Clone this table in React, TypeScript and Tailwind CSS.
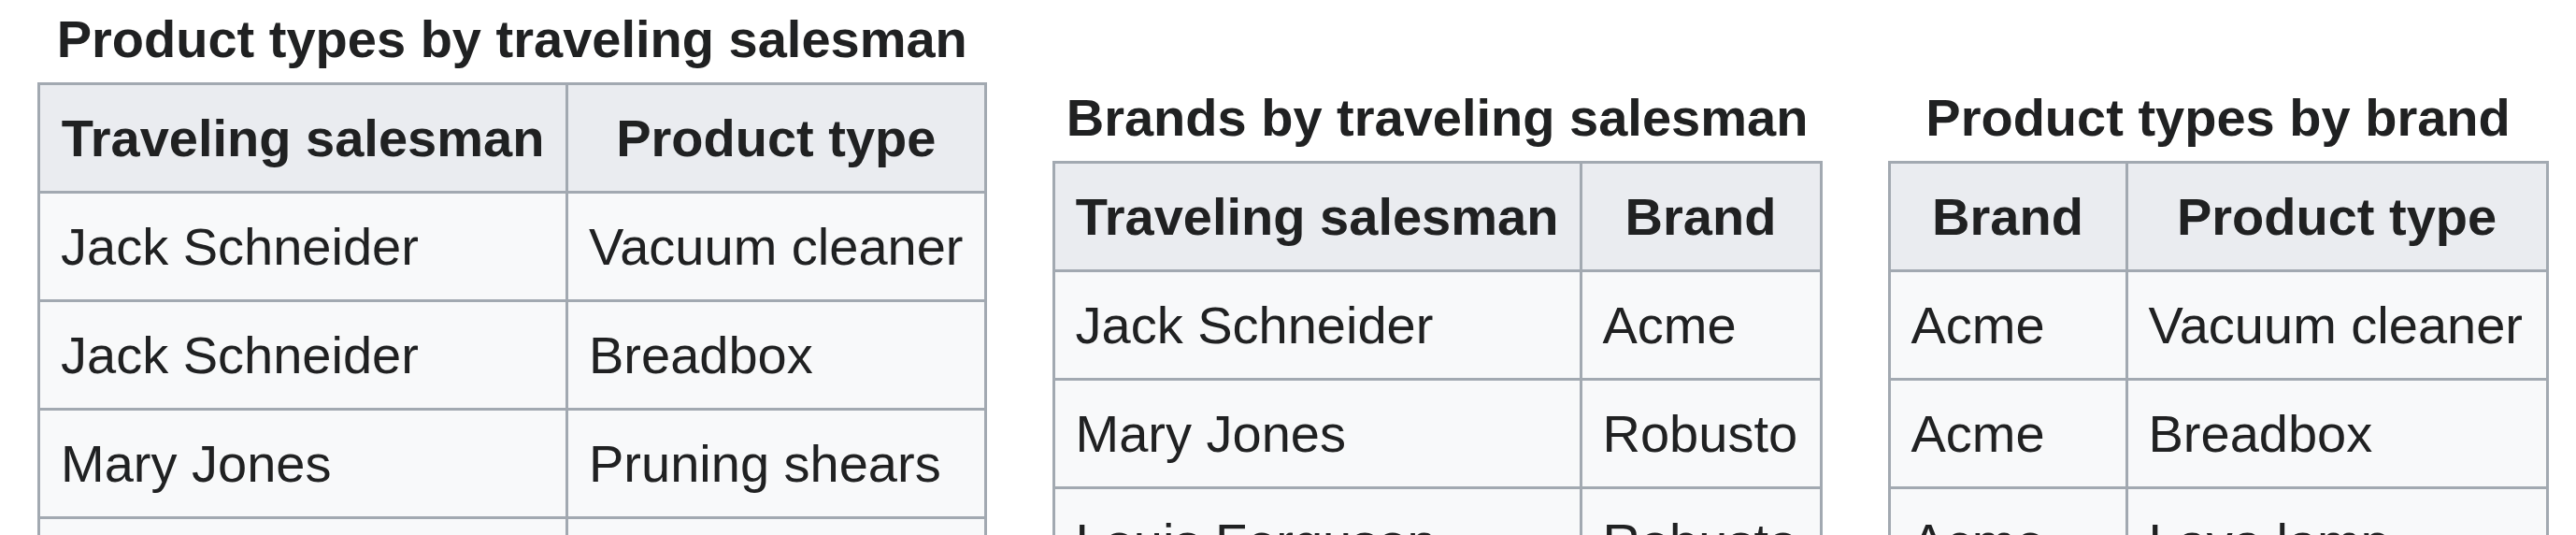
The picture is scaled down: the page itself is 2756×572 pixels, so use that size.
import React from "react"

type Table = {
  caption: string
  heads: [string, string]
  widths: [string, string]
  rows: [string, string][]
  offset: boolean
}

// column widths include padding and the right border
const tables: Table[] = [
  {
    caption: "Product types by traveling salesman",
    heads: ["Traveling salesman", "Product type"],
    widths: ["w-[565px]", "w-[447px]"],
    rows: [
      ["Jack Schneider", "Vacuum cleaner"],
      ["Jack Schneider", "Breadbox"],
      ["Mary Jones", "Pruning shears"],
      ["Mary Jones", "Vacuum cleaner"],
    ],
    offset: false,
  },
  {
    caption: "Brands by traveling salesman",
    heads: ["Traveling salesman", "Brand"],
    widths: ["w-[564px]", "w-[257px]"],
    rows: [
      ["Jack Schneider", "Acme"],
      ["Mary Jones", "Robusto"],
      ["Louis Ferguson", "Robusto"],
    ],
    offset: true,
  },
  {
    caption: "Product types by brand",
    heads: ["Brand", "Product type"],
    widths: ["w-[254px]", "w-[450px]"],
    rows: [
      ["Acme", "Vacuum cleaner"],
      ["Acme", "Breadbox"],
      ["Acme", "Lava lamp"],
    ],
    offset: true,
  },
]

function WikiTable({ t }: { t: Table }) {
  return (
    <table
      className={`border-separate border-spacing-0 border-l-[3px] border-t-[3px] border-[#a2a9b1] text-[56px] text-[#202122] ${
        t.offset ? "mt-[84px]" : ""
      }`}
    >
      <caption className="pb-[4px] text-center font-bold leading-[84px] whitespace-nowrap">{t.caption}</caption>
      <thead>
        <tr>
          {t.heads.map((h, i) => (
            <th
              key={i}
              className={`${t.widths[i]} whitespace-nowrap border-r-[3px] border-b-[3px] border-[#a2a9b1] bg-[#eaecf0] px-[22px] py-[11.5px] text-center font-bold leading-[90px]`}
            >
              {h}
            </th>
          ))}
        </tr>
      </thead>
      <tbody>
        {t.rows.map((r, i) => (
          <tr key={i}>
            {r.map((c, j) => (
              <td
                key={j}
                className="whitespace-nowrap border-r-[3px] border-b-[3px] border-[#a2a9b1] bg-[#f8f9fa] px-[22px] py-[11.5px] text-left leading-[90px]"
              >
                {c}
              </td>
            ))}
          </tr>
        ))}
      </tbody>
    </table>
  )
}

export default function App() {
  return (
    <div className="h-[572px] overflow-hidden bg-white font-['Liberation_Sans',Arial,sans-serif]">
      <div className="flex items-start gap-[70px] pl-[40px]">
        {tables.map((t) => (
          <WikiTable key={t.caption} t={t} />
        ))}
      </div>
    </div>
  )
}
